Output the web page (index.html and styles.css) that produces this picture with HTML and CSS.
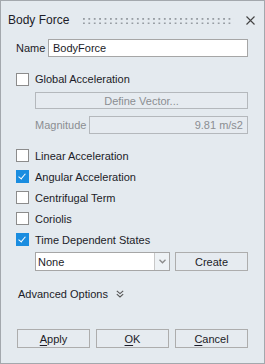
FILE: index.html
```html
<!DOCTYPE html>
<html lang="en">
<head>
    <meta charset="UTF-8">
    <title>Body Force</title>
    <link rel="stylesheet" href="styles.css">
</head>
<body>
    <div class="dialog">
        <div class="titlebar">
            <span class="title">Body Force</span>
            <span class="grip"></span>
            <svg class="close" width="9" height="9" viewBox="0 0 9 9">
                <path d="M0.5 0.5 L8.5 8.5 M8.5 0.5 L0.5 8.5" stroke="#444" stroke-width="1.1" fill="none"/>
            </svg>
        </div>

        <div class="content">
            <div class="name-row">
                <label>Name</label>
                <input class="field" type="text" value="BodyForce">
            </div>

            <div class="check-row global">
                <span class="box"></span>
                <span>Global Acceleration</span>
            </div>
            <div class="sub">
                <div class="btn disabled">Define Vector...</div>
                <div class="mag-row">
                    <span class="muted">Magnitude</span>
                    <div class="field readonly">9.81 m/s2</div>
                </div>
            </div>

            <div class="checks">
                <div class="check-row"><span class="box"></span><span>Linear Acceleration</span></div>
                <div class="check-row"><span class="box on"></span><span>Angular Acceleration</span></div>
                <div class="check-row"><span class="box"></span><span>Centrifugal Term</span></div>
                <div class="check-row"><span class="box"></span><span>Coriolis</span></div>
                <div class="check-row"><span class="box on"></span><span>Time Dependent States</span></div>
            </div>
            <div class="combo-row">
                <div class="combo">
                    <span class="combo-text">None</span>
                    <span class="combo-arrow">
                        <svg width="7" height="5" viewBox="0 0 7 5"><path d="M0.5 0.8 L3.5 3.8 L6.5 0.8" stroke="#8a8a8a" stroke-width="1.3" fill="none"/></svg>
                    </span>
                </div>
                <div class="btn create">Create</div>
            </div>

            <div class="advanced">
                <span>Advanced Options</span>
                <svg width="8" height="8" viewBox="0 0 8 8">
                    <path d="M0.8 0.8 L4 3.6 L7.2 0.8 M0.8 4.2 L4 7 L7.2 4.2" stroke="#555" stroke-width="1.1" fill="none"/>
                </svg>
            </div>

            <div class="actions">
                <div class="btn"><u>A</u>pply</div>
                <div class="btn"><u>O</u>K</div>
                <div class="btn"><u>C</u>ancel</div>
            </div>
        </div>
    </div>
</body>
</html>
```

FILE: styles.css
```css
* {
    box-sizing: border-box;
}
body {
    margin: 0;
    font-family: "Liberation Sans", Arial, sans-serif;
    font-size: 11px;
    color: #1c1c28;
}
.dialog {
    width: 265px;
    height: 364px;
    background: #e4eaef;
    border: 1px solid #a3a8ad;
}
.titlebar {
    height: 38px;
    display: flex;
    align-items: center;
    padding: 0 0 0 7px;
}
.title {
    font-size: 12px;
    width: 75px;
}
/* dotted drag handle */
.grip {
    width: 151px;
    height: 6px;
    margin-top: 2px;
    background-image: radial-gradient(circle at 0.75px 0.75px, #979da3 0.9px, transparent 1px);
    background-size: 5.4px 4.5px;
}
.close {
    margin-left: 12px;
    margin-top: 1px;
}
.content {
    padding: 0 16px 0 15px;
}
.name-row {
    display: flex;
    align-items: center;
    height: 18px;
}
.name-row label {
    width: 32px;
}
.field {
    flex: 1;
    height: 18px;
    border: 1px solid #a6a6a6;
    background: #fff;
    font: inherit;
    color: inherit;
    padding: 0 4px;
    outline: none;
}
.check-row {
    display: flex;
    align-items: center;
    height: 21px;
}
.check-row.global {
    margin-top: 12px;
    height: 20px;
}
.box {
    width: 13px;
    height: 13px;
    border: 1px solid #8c8c8c;
    background: #fff;
    margin-right: 6px;
    position: relative;
}
.box.on {
    background: #1a8de0;
    border-color: #1a8de0;
}
.box.on::after {
    content: "";
    position: absolute;
    left: 3px;
    top: 1px;
    width: 3px;
    height: 6px;
    border: solid #fff;
    border-width: 0 1.5px 1.5px 0;
    transform: rotate(40deg);
}
.sub {
    padding-left: 19px;
}
.btn {
    height: 18px;
    border: 1px solid #adadad;
    background: #e6ebf0;
    display: flex;
    align-items: center;
    justify-content: center;
}
.btn.disabled {
    color: #8b8e92;
    border-color: #b4b8bc;
    margin-top: 3px;
    height: 17px;
}
.muted {
    color: #8b8e92;
}
.mag-row {
    display: flex;
    align-items: center;
    margin-top: 7px;
}
.mag-row .muted {
    width: 54px;
}
.field.readonly {
    background: #e6ebf0;
    border-color: #b4b8bc;
    color: #8b8e92;
    display: flex;
    align-items: center;
    justify-content: flex-end;
}
.checks {
    margin-top: 11px;
}
.combo-row {
    display: flex;
    margin-top: 2px;
    padding-left: 19px;
    height: 19px;
}
.combo {
    display: flex;
    width: 135px;
    border: 1px solid #a6a6a6;
    background: #fff;
}
.combo-text {
    flex: 1;
    display: flex;
    align-items: center;
    padding-left: 2px;
}
.combo-arrow {
    width: 15px;
    border-left: 1px solid #c8c8c8;
    background: #eef2f5;
    display: flex;
    align-items: center;
    justify-content: center;
}
.btn.create {
    flex: 1;
    height: 19px;
    margin-left: 5px;
}
.advanced {
    display: flex;
    align-items: center;
    height: 20px;
    margin-top: 13px;
    padding-left: 2px;
}
.advanced svg {
    margin-left: 8px;
}
.actions {
    display: flex;
    gap: 6px;
    margin-top: 25px;
    padding-left: 1px;
}
.actions .btn {
    flex: 1;
    height: 19px;
}
.actions u {
    text-decoration-thickness: 1px;
    text-underline-offset: 2px;
}
```
